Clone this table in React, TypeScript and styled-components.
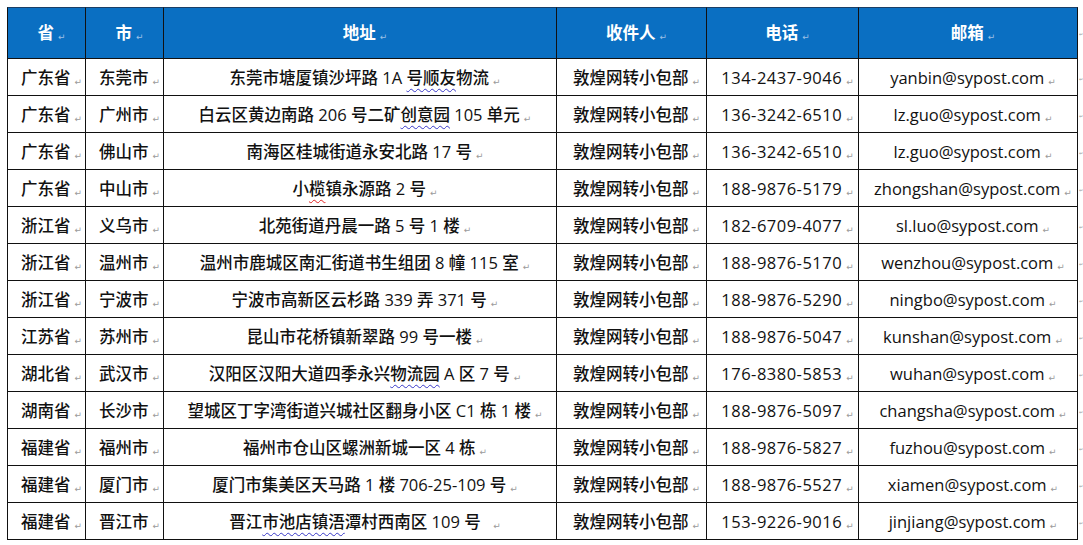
import React from "react";
import styled, { createGlobalStyle } from "styled-components";

const Global = createGlobalStyle`
  html, body { margin: 0; padding: 0; background: #ffffff; }
  body { font-family: "Open Sans", "Noto Sans CJK SC", sans-serif; color: #111; }
`;

const Page = styled.div`
  padding: 7px 0 0 7px;
  width: 1083px;
  height: 545px;
  box-sizing: border-box;
  overflow: hidden;
`;

const Grid = styled.div`
  display: grid;
  grid-template-columns: 79px 78px 393px 150px 152px 219px 5px;
  grid-template-rows: 52px repeat(13, 37px);
`;

const Cell = styled.div<{ $head?: boolean; $first?: boolean }>`
  box-sizing: border-box;
  display: flex;
  align-items: center;
  justify-content: center;
  font-weight: ${(p) => (p.$head ? 700 : 500)};
  color: ${(p) => (p.$head ? "#ffffff" : "#111111")};
  background: ${(p) => (p.$head ? "#0a6fc2" : "#ffffff")};
  border-right: 1px solid #111;
  border-bottom: 1px solid #111;
  border-top: ${(p) => (p.$head ? "1px solid #1b3f66" : "none")};
  border-left: ${(p) => (p.$first ? "1px solid #111" : "none")};
  padding-top: ${(p) => (p.$head ? "0" : "1px")};
`;

const Content = styled.span<{ $spacing?: number }>`
  white-space: pre;
  font-size: 16.5px;
  line-height: 22px;
  letter-spacing: ${(p) => (p.$spacing ? `${p.$spacing}px` : "0")};
`;

const EndCell = styled.div`
  display: flex;
  align-items: center;
  padding-left: 1px;
  padding-top: 3px;
`;

const Mark = styled.span<{ $light?: boolean; $hang?: boolean; $small?: boolean }>`
  display: inline-block;
  font-family: "DejaVu Sans", sans-serif;
  font-size: ${(p) => (p.$small ? "5px" : "9px")};
  line-height: 9px;
  font-weight: 400;
  letter-spacing: 0;
  color: ${(p) => (p.$light ? "#9cc0e6" : "#9a9a9a")};
  margin-left: ${(p) => (p.$hang ? "4px" : "0")};
  margin-right: ${(p) => (p.$hang ? "-10px" : "0")};
  vertical-align: -1px;
`;

const Wave = styled.span<{ $red?: boolean }>`
  text-decoration: underline wavy ${(p) => (p.$red ? "#e02020" : "#3838c8")};
  text-decoration-thickness: 1px;
  text-underline-offset: 4px;
`;

const headers = ["省", "市", "地址", "收件人", "电话", "邮箱"];

const rows: string[][] = [
  ["广东省", "东莞市", "东莞市塘厦镇沙坪路 1A {号顺友}物流", "134-2437-9046", "yanbin@sypost.com"],
  ["广东省", "广州市", "白云区黄边南路 206 号二矿{创意园} 105 单元", "136-3242-6510", "lz.guo@sypost.com"],
  ["广东省", "佛山市", "南海区桂城街道永安北路 17 号", "136-3242-6510", "lz.guo@sypost.com"],
  ["广东省", "中山市", "小[榄]镇永源路 2 号", "188-9876-5179", "zhongshan@sypost.com"],
  ["浙江省", "义乌市", "北苑街道丹晨一路 5 号 1 楼", "182-6709-4077", "sl.luo@sypost.com"],
  ["浙江省", "温州市", "温州市鹿城区南汇街道书生组团 8 幢 115 室", "188-9876-5170", "wenzhou@sypost.com"],
  ["浙江省", "宁波市", "宁波市高新区云杉路 339 弄 371 号", "188-9876-5290", "ningbo@sypost.com"],
  ["江苏省", "苏州市", "昆山市花桥镇新翠路 99 号一楼", "188-9876-5047", "kunshan@sypost.com"],
  ["湖北省", "武汉市", "汉阳区汉阳大道四季永兴{物流园} A 区 7 号", "176-8380-5853", "wuhan@sypost.com"],
  ["湖南省", "长沙市", "望城区丁字湾街道兴城社区翻身小区 C1 栋 1 楼", "188-9876-5097", "changsha@sypost.com"],
  ["福建省", "福州市", "福州市仓山区螺洲新城一区 4 栋", "188-9876-5827", "fuzhou@sypost.com"],
  ["福建省", "厦门市", "厦门市集美区天马路 1 楼 706-25-109 号", "188-9876-5527", "xiamen@sypost.com"],
  ["福建省", "晋江市", "晋江{市池店镇浯}潭村西南区 109 号  ", "153-9226-9016", "jinjiang@sypost.com"],
];

function renderAddress(text: string) {
  const parts: React.ReactNode[] = [];
  const re = /\{([^}]*)\}|\[([^\]]*)\]/g;
  let last = 0;
  let m: RegExpExecArray | null;
  let k = 0;
  while ((m = re.exec(text))) {
    if (m.index > last) parts.push(text.slice(last, m.index));
    if (m[1] !== undefined) parts.push(<Wave key={k++}>{m[1]}</Wave>);
    else parts.push(<Wave key={k++} $red>{m[2]}</Wave>);
    last = m.index + m[0].length;
  }
  if (last < text.length) parts.push(text.slice(last));
  return parts;
}

function TextCell({
  children,
  head,
  first,
  spacing,
}: {
  children: React.ReactNode;
  head?: boolean;
  first?: boolean;
  spacing?: number;
}) {
  return (
    <Cell $head={head} $first={first}>
      <Content $spacing={spacing}>
        {children}
        <Mark $hang $light={head}>↵</Mark>
      </Content>
    </Cell>
  );
}

export default function App() {
  return (
    <>
      <Global />
      <Page>
        <Grid>
          {headers.map((h, i) => (
            <TextCell key={h} head first={i === 0}>
              {h}
            </TextCell>
          ))}
          <EndCell>
            <Mark $small>↵</Mark>
          </EndCell>
          {rows.map((r, ri) => (
            <React.Fragment key={ri}>
              <TextCell first>{r[0]}</TextCell>
              <TextCell>{r[1]}</TextCell>
              <TextCell>{renderAddress(r[2])}</TextCell>
              <TextCell>敦煌网转小包部</TextCell>
              <TextCell spacing={0.5}>{r[3]}</TextCell>
              <TextCell>{r[4]}</TextCell>
              <EndCell>
                <Mark $small>↵</Mark>
              </EndCell>
            </React.Fragment>
          ))}
        </Grid>
      </Page>
    </>
  );
}
